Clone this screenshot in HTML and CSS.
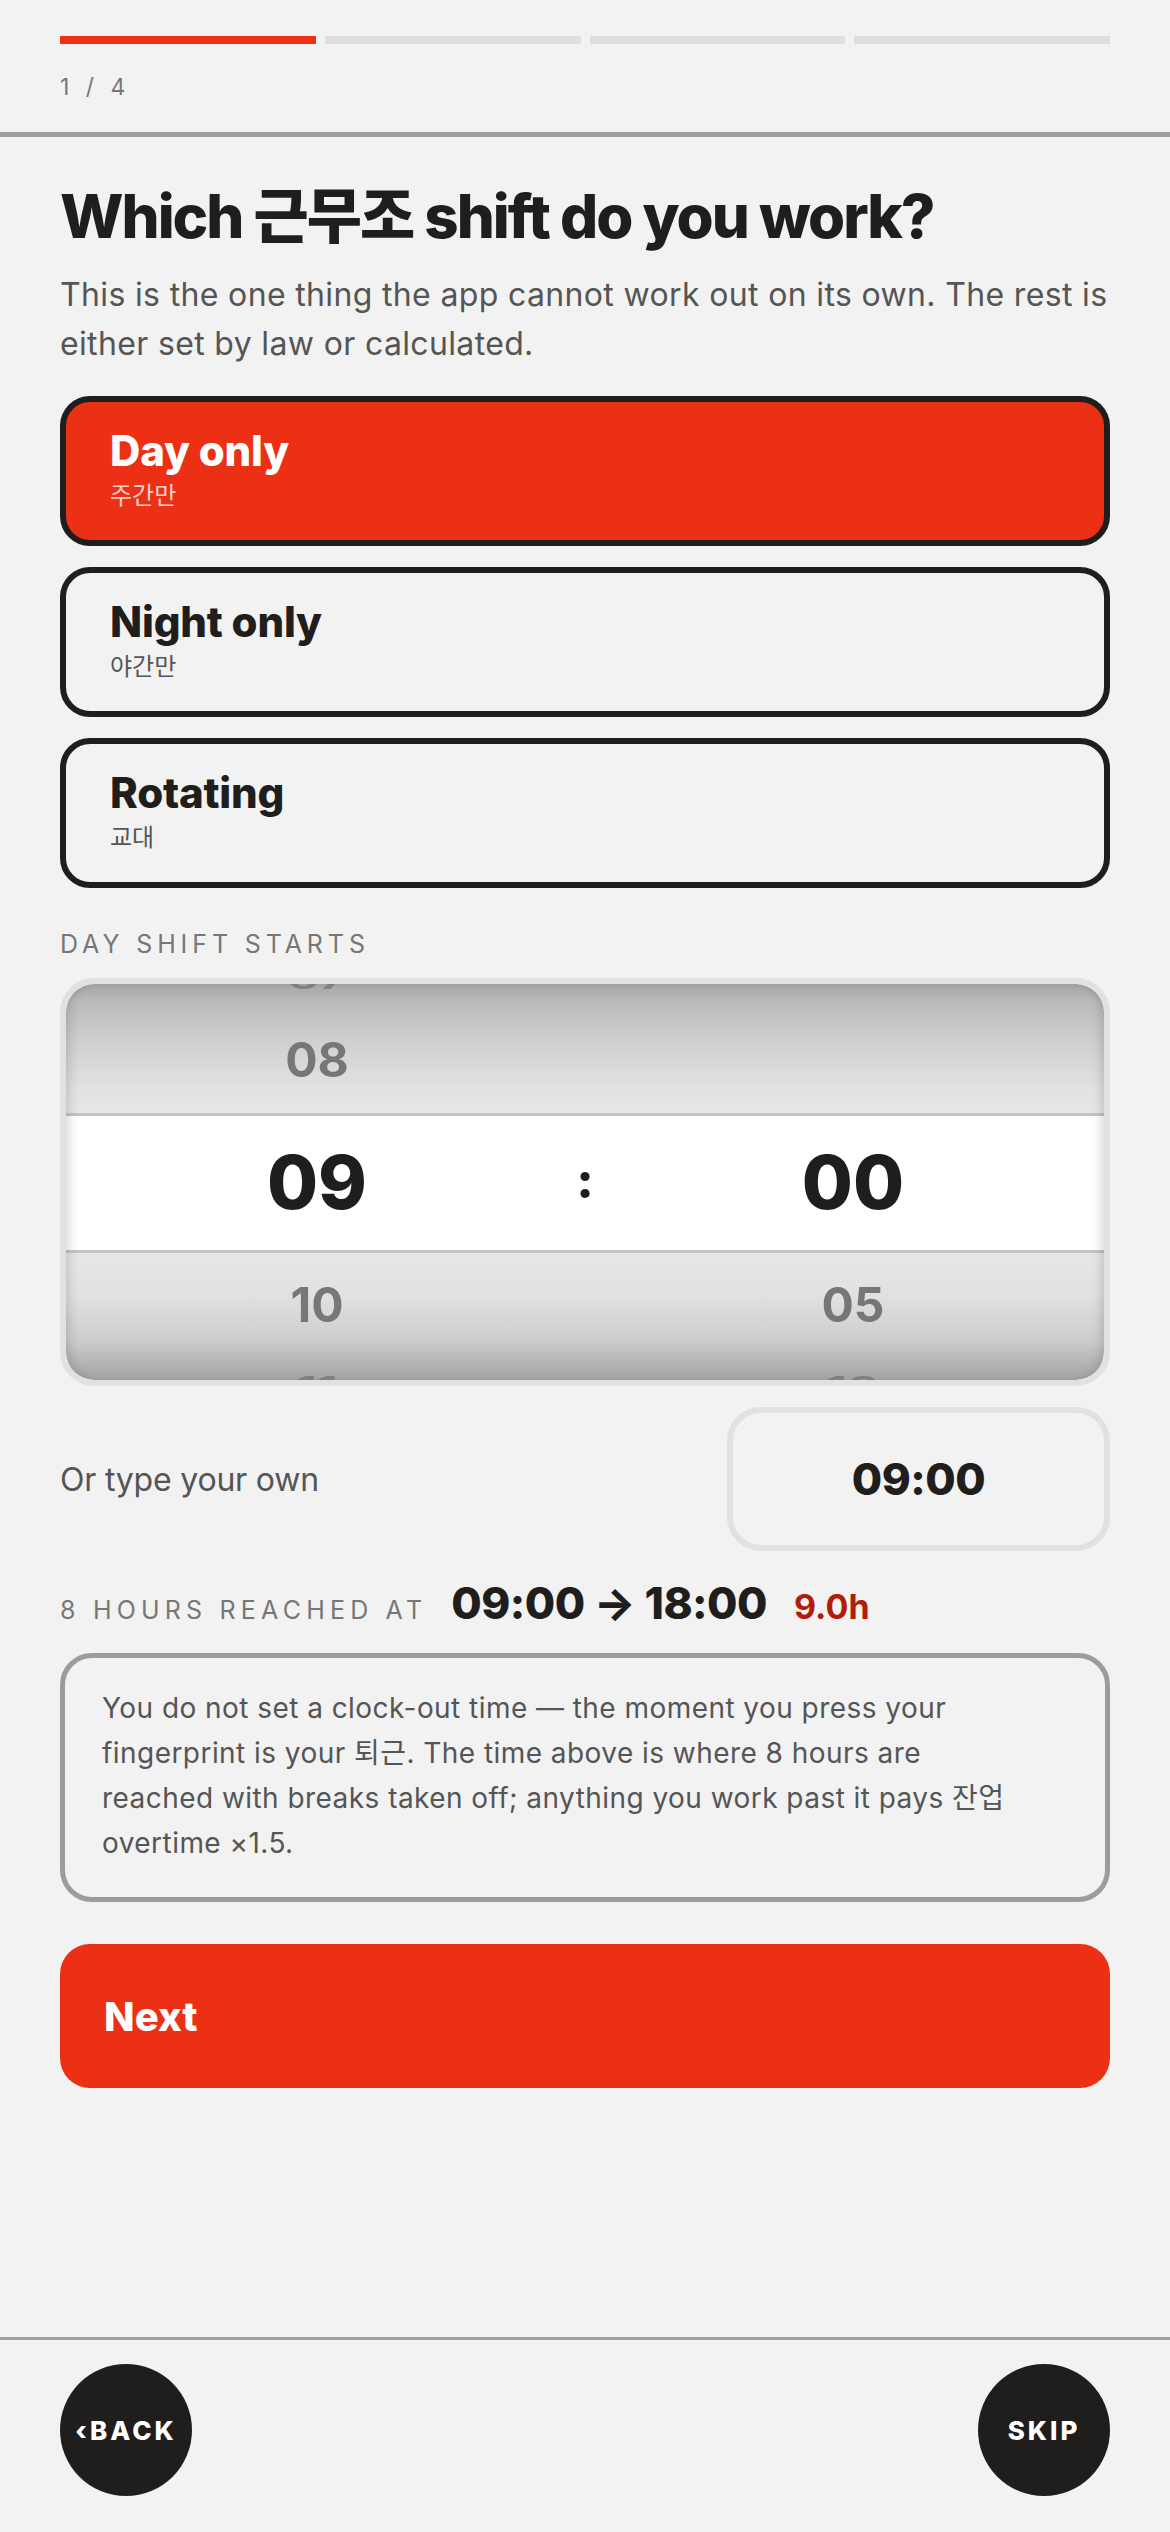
FILE: index.html
```html
<!DOCTYPE html>
<html lang="en">
<head>
<meta charset="utf-8">
<title>Shift setup</title>
<link rel="stylesheet" href="styles.css">
</head>
<body>
<div class="page">
  <header class="top">
    <div class="progress">
      <span class="seg seg-on"></span>
      <span class="seg"></span>
      <span class="seg"></span>
      <span class="seg"></span>
    </div>
    <div class="counter">1 / 4</div>
  </header>

  <main class="main">
    <h1 class="title">Which 근무조 shift do you work?</h1>
    <p class="lead">This is the one thing the app cannot work out on its own. The rest is either set by law or calculated.</p>

    <div class="options">
      <div class="option option-on">
        <div class="opt-title">Day only</div>
        <div class="opt-sub">주간만</div>
      </div>
      <div class="option">
        <div class="opt-title">Night only</div>
        <div class="opt-sub">야간만</div>
      </div>
      <div class="option">
        <div class="opt-title">Rotating</div>
        <div class="opt-sub">교대</div>
      </div>
    </div>

    <div class="label">DAY SHIFT STARTS</div>

    <div class="picker">
      <div class="wheel">
        <div class="col">
          <div class="item far">07</div>
          <div class="item near">08</div>
          <div class="item sel">09</div>
          <div class="item near">10</div>
          <div class="item far">11</div>
        </div>
        <div class="col col-colon">
          <div class="item far"></div>
          <div class="item near"></div>
          <div class="item sel colon">:</div>
          <div class="item near"></div>
          <div class="item far"></div>
        </div>
        <div class="col">
          <div class="item far"></div>
          <div class="item near"></div>
          <div class="item sel">00</div>
          <div class="item near">05</div>
          <div class="item far">10</div>
        </div>
      </div>
    </div>

    <div class="own">
      <span class="own-label">Or type your own</span>
      <div class="own-input">09:00</div>
    </div>

    <div class="reach">
      <span class="reach-label">8 HOURS REACHED AT</span>
      <span class="reach-time">09:00 → 18:00</span>
      <span class="reach-hours">9.0h</span>
    </div>

    <div class="note">You do not set a clock-out time — the moment you press your fingerprint is your 퇴근. The time above is where 8 hours are reached with breaks taken off; anything you work past it pays 잔업 overtime ×1.5.</div>

    <button class="next">Next</button>
  </main>

  <footer class="bottom">
    <button class="circle">‹BACK</button>
    <button class="circle">SKIP</button>
  </footer>
</div>
</body>
</html>
```

FILE: styles.css
```css
* { box-sizing: border-box; }

html, body {
  margin: 0;
  padding: 0;
  background: #f2f2f2;
}

body {
  font-family: Inter, "Noto Sans CJK KR", sans-serif;
  color: #1f1e1c;
}

.page {
  display: flex;
  flex-direction: column;
  min-height: 2532px;
}

/* header */
.top {
  padding: 36px 60px 32px;
  border-bottom: 5px solid #a09f9e;
}

.progress {
  display: flex;
  gap: 9px;
}

.seg {
  flex: 1;
  height: 8px;
  background: #dfdedc;
}

.seg-on { background: #ee3116; }

.counter {
  margin-top: 30px;
  font-size: 23px;
  line-height: 26px;
  letter-spacing: 5px;
  color: #777;
}

/* main */
.main {
  padding: 0 60px;
  display: flex;
  flex-direction: column;
}

.title {
  margin: 43px 0 0;
  font-size: 60px;
  line-height: 72px;
  font-weight: 800;
  letter-spacing: -2px;
  font-family: Inter, "Noto Sans CJK KR", sans-serif;
}

.lead {
  margin: 18px 0 0;
  font-size: 32px;
  line-height: 49px;
  color: #555;
  letter-spacing: 0.35px;
}

.options {
  margin-top: 28px;
  display: flex;
  flex-direction: column;
  gap: 21px;
}

.option {
  height: 150px;
  border: 6px solid #1f1e1c;
  border-radius: 30px;
  padding: 24px 44px 0;
}

.option-on {
  background: #ec3015;
  color: #fff;
}

.opt-title {
  font-size: 42px;
  line-height: 50px;
  font-weight: 800;
  letter-spacing: -0.2px;
}

.opt-sub {
  margin-top: 3px;
  font-size: 24px;
  line-height: 30px;
  color: #555;
  font-family: "Noto Sans CJK KR", sans-serif;
}

.option-on .opt-sub { color: rgba(255, 255, 255, 0.8); }

.label {
  margin-top: 41px;
  font-size: 25px;
  line-height: 30px;
  letter-spacing: 4.9px;
  color: #777;
}

/* picker */
.picker {
  margin-top: 19px;
  border: 6px solid #e2e1df;
  border-radius: 34px;
  overflow: hidden;
}

.wheel {
  height: 396px;
  display: grid;
  grid-template-columns: 1fr 34px 1fr;
  overflow: hidden;
  border-radius: 28px;
  background:
    linear-gradient(to bottom,
      #a6a5a4 0px,
      #bcbbba 18px,
      #d1d0cf 60px,
      #e3e2e2 105px,
      #e8e7e7 129px,
      #c5c4c3 129px,
      #c5c4c3 132px,
      #ffffff 132px,
      #ffffff 266px,
      #c5c4c3 266px,
      #c5c4c3 269px,
      #e8e7e7 269px,
      #e2e1e1 310px,
      #cfcecd 355px,
      #b3b2b1 382px,
      #a3a2a1 396px);
  box-shadow: inset 10px 0 12px -8px rgba(0,0,0,0.18), inset -10px 0 12px -8px rgba(0,0,0,0.18);
}

.col {
  display: flex;
  flex-direction: column;
  justify-content: center;
  align-items: center;
  min-height: 0;
}

.item {
  flex: none;
  display: flex;
  align-items: center;
  justify-content: center;
  width: 100%;
  font-weight: 700;
  color: #777;
}

.far {
  height: 50px;
  font-size: 48px;
  transform: scaleY(0.5);
  opacity: 0.8;
}

.near {
  height: 110px;
  font-size: 48px;
  filter: blur(0.4px);
}

.sel {
  height: 135px;
  font-size: 74px;
  font-weight: 800;
  color: #1f1e1c;
}

.colon {
  font-size: 50px;
  padding-bottom: 4px;
}

/* type own */
.own {
  margin-top: 21px;
  display: flex;
  align-items: center;
  justify-content: space-between;
}

.own-label {
  font-size: 32px;
  color: #555;
  letter-spacing: -0.2px;
}

.own-input {
  width: 383px;
  height: 144px;
  border: 6px solid #e2e1df;
  border-radius: 34px;
  display: flex;
  align-items: center;
  justify-content: center;
  font-size: 44px;
  font-weight: 800;
  letter-spacing: -0.5px;
}

/* reached */
.reach {
  margin-top: 26px;
  display: flex;
  align-items: baseline;
  line-height: 53px;
}

.reach-label {
  font-size: 25px;
  letter-spacing: 5.2px;
  color: #777;
}

.reach-time {
  margin-left: 24px;
  font-size: 44px;
  font-weight: 800;
  letter-spacing: -0.5px;
}

.reach-hours {
  margin-left: 27px;
  font-size: 34px;
  font-weight: 700;
  color: #b21c0a;
}

/* note */
.note {
  margin-top: 16px;
  border: 5px solid #9d9c9b;
  border-radius: 32px;
  padding: 28px 95px 31px 37px;
  font-size: 28px;
  line-height: 45px;
  color: #555;
  letter-spacing: 0.45px;
}

/* next */
.next {
  margin-top: 42px;
  height: 144px;
  border: none;
  border-radius: 30px;
  background: #ec3015;
  color: #fff;
  font-family: Inter, sans-serif;
  font-size: 40px;
  font-weight: 800;
  text-align: left;
  padding: 0 44px;
}

/* footer */
.bottom {
  margin-top: auto;
  border-top: 3px solid #a09f9e;
  padding: 24px 60px 36px;
  display: flex;
  justify-content: space-between;
}

.circle {
  width: 132px;
  height: 132px;
  border-radius: 50%;
  border: none;
  background: #1f1e1c;
  color: #fff;
  font-family: Inter, sans-serif;
  font-size: 26px;
  font-weight: 800;
  letter-spacing: 3px;
  padding: 0;
}
```
